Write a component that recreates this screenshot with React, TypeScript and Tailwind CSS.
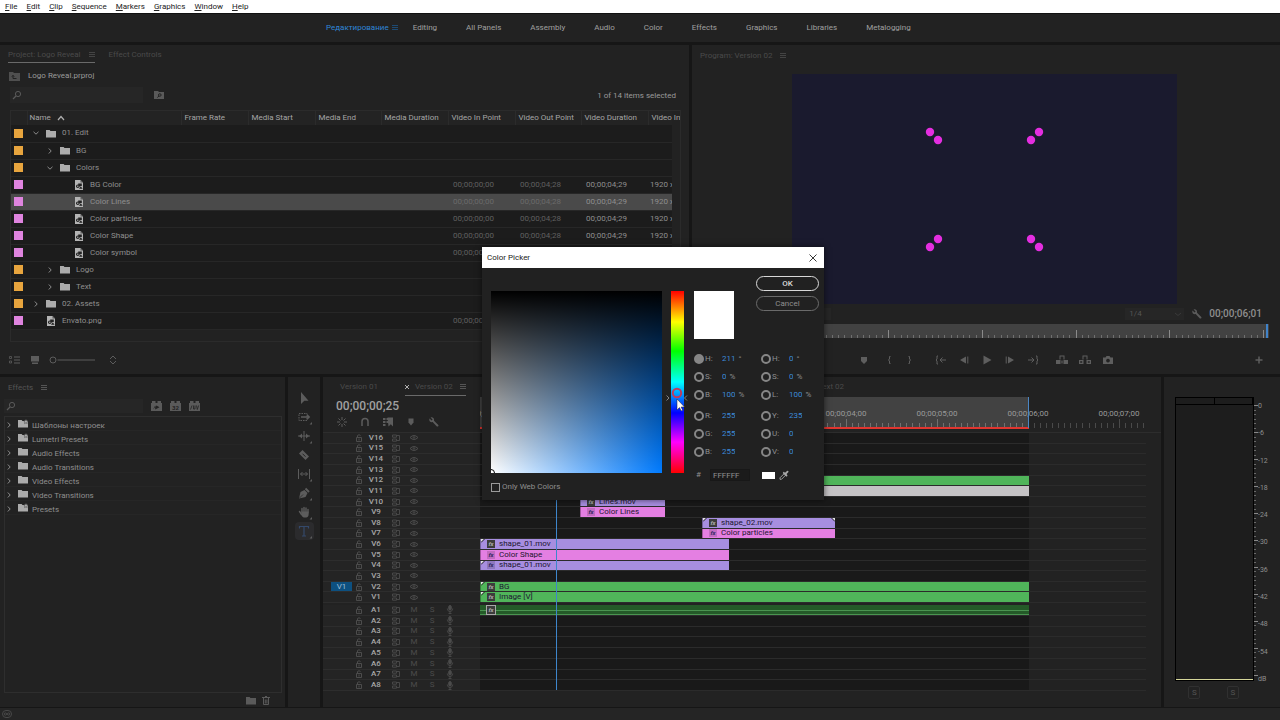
import React from 'react';
import clsx from 'clsx';

const menus = ['File', 'Edit', 'Clip', 'Sequence', 'Markers', 'Graphics', 'Window', 'Help'];

const workspaces = [
  'Editing', 'All Panels', 'Assembly', 'Audio', 'Color', 'Effects', 'Graphics', 'Libraries', 'Metalogging',
];

interface ProjectItem {
  name: string;
  kind: 'bin' | 'file';
  depth: number;
  open?: boolean;
  media?: boolean;
  selected?: boolean;
}

const projectItems: ProjectItem[] = [
  { name: '01. Edit', kind: 'bin', depth: 0, open: true },
  { name: 'BG', kind: 'bin', depth: 1 },
  { name: 'Colors', kind: 'bin', depth: 1, open: true },
  { name: 'BG Color', kind: 'file', depth: 2, media: true },
  { name: 'Color Lines', kind: 'file', depth: 2, media: true, selected: true },
  { name: 'Color particles', kind: 'file', depth: 2, media: true },
  { name: 'Color Shape', kind: 'file', depth: 2, media: true },
  { name: 'Color symbol', kind: 'file', depth: 2, media: true },
  { name: 'Logo', kind: 'bin', depth: 1 },
  { name: 'Text', kind: 'bin', depth: 1 },
  { name: '02. Assets', kind: 'bin', depth: 0 },
  { name: 'Envato.png', kind: 'file', depth: 0, media: true },
];

const columns = [
  { name: 'Frame Rate', width: 'w-[67px]' },
  { name: 'Media Start', width: 'w-[67px]' },
  { name: 'Media End', width: 'w-[66px]' },
  { name: 'Media Duration', width: 'w-[67px]' },
  { name: 'Video In Point', width: 'w-[67px]' },
  { name: 'Video Out Point', width: 'w-[66px]' },
  { name: 'Video Duration', width: 'w-[67px]' },
  { name: 'Video In', width: 'w-6' },
];

const effectBins = [
  { name: 'Шаблоны настроек', preset: true },
  { name: 'Lumetri Presets', preset: true },
  { name: 'Audio Effects' },
  { name: 'Audio Transitions' },
  { name: 'Video Effects' },
  { name: 'Video Transitions' },
  { name: 'Presets', preset: true },
];

interface Clip {
  name: string;
  start: number;
  end: number;
  tone: 'violet' | 'pink' | 'green' | 'grey';
  dark?: boolean;
  headMark?: boolean;
  tailMark?: boolean;
}

// start and end are in timeline pixels, 91px to the second
const clips: Record<string, Clip> = {
  V12: { name: 'Text 02', start: 222, end: 549, tone: 'green' },
  V11: { name: 'Text 02', start: 222, end: 549, tone: 'grey' },
  V10: { name: 'Lines.mov', start: 100, end: 185, tone: 'violet', dark: true },
  V9: { name: 'Color Lines', start: 100, end: 185, tone: 'pink' },
  V8: { name: 'shape_02.mov', start: 222, end: 355, tone: 'violet', dark: true, headMark: true, tailMark: true },
  V7: { name: 'Color particles', start: 222, end: 355, tone: 'pink' },
  V6: { name: 'shape_01.mov', start: 0, end: 249, tone: 'violet', dark: true, headMark: true },
  V5: { name: 'Color Shape', start: 0, end: 249, tone: 'pink' },
  V4: { name: 'shape_01.mov', start: 0, end: 249, tone: 'violet', headMark: true },
  V2: { name: 'BG', start: 0, end: 549, tone: 'green', dark: true, headMark: true },
  V1: { name: 'Image [V]', start: 0, end: 549, tone: 'green', dark: true, headMark: true },
};

const tones = {
  violet: 'bg-[#a78ee0]',
  pink: 'bg-[#e47fe2]',
  green: 'bg-[#50b55a]',
  grey: 'bg-[#c4c2c4]',
};

const videoTracks = Array.from({ length: 16 }, (_, i) => `V${16 - i}`);
const audioTracks = Array.from({ length: 8 }, (_, i) => `A${i + 1}`);

const MenuIcon = ({ className = 'text-[#444]' }: { className?: string }) => (
  <svg viewBox="0 0 6 6" className={clsx('size-1.5 shrink-0', className)} stroke="currentColor" shapeRendering="crispEdges">
    <path d="M0 .5h6M0 2.5h6M0 4.5h6" />
  </svg>
);

const SearchIcon = () => (
  <svg viewBox="0 0 10 10" className="size-2.5 shrink-0 text-[#5a5a5a]" fill="none" stroke="currentColor">
    <circle cx="6" cy="4" r="2.6" />
    <path d="M4 6 1 9" strokeWidth="1.2" />
  </svg>
);

const Chevron = ({ open }: { open?: boolean }) => (
  <svg viewBox="0 0 8 8" className="size-2 shrink-0 text-[#8c8c8c]" fill="none" stroke="currentColor">
    <path d={open ? 'M1.5 2.8 4 5.2l2.5-2.4' : 'M2.8 1.5 5.2 4 2.8 6.5'} />
  </svg>
);

const FolderIcon = ({ preset, className = 'text-[#ababab]' }: { preset?: boolean; className?: string }) => (
  <svg viewBox="0 0 10 9" className={clsx('h-[9px] w-2.5 shrink-0', className)} fill="currentColor">
    <path d="M0 1h3.6l.9 1H10v6.6H0z" />
    {preset && <path d="m8 0 .7 1.6 1.3.2-1 1.2.2 1.6L8 3.8l-1.4.8.2-1.6-1-1.2 1.5-.2z" stroke="#222" strokeWidth=".4" />}
  </svg>
);

const FileIcon = () => (
  <svg viewBox="0 0 10 11" className="h-[11px] w-2.5 shrink-0">
    <path d="M1 1h5.5L9 3.5V11H1z" fill="#b4b4b4" />
    <path d="M6.5 1v2.500H9" fill="#5a5a5a" />
    <path d="M4.200 4.500h3.600v2.500H4.200z" fill="#222" />
    <circle cx="3.800" cy="7.300" r="1.800" fill="#222" />
    <path d="m5 9.800 1.800-2.600 1.800 2.600z" fill="#222" />
    <circle cx="3.800" cy="7.300" r=".7" fill="#b4b4b4" />
  </svg>
);

const FxBadge = ({ dark }: { dark?: boolean }) => (
  <span
    className={clsx(
      'flex size-2 shrink-0 items-center justify-center text-[6px] leading-none font-bold italic',
      dark ? 'bg-[#3c3c3c] text-[#b0b0b0]' : 'bg-black/15 text-[#2f2660]',
    )}
  >
    fx
  </span>
);

const WrenchIcon = () => (
  <svg viewBox="0 0 10 10" className="size-2.5 shrink-0" fill="currentColor">
    <path d="M1.6.5 3.6 2.5 2.6 3.6.5 1.6C-.2 3.5 1 5.6 3.6 5.1l4.3 4.3c1 .6 2-.5 1.4-1.4L5 3.7C5.5 1.3 3.7-.1 1.6.5z" />
  </svg>
);

const MenuBar = () => (
  <nav className="flex h-3.5 items-center gap-[9px] border-b border-[#111] bg-white pl-[5px] text-[#222]">
    {menus.map((m) => (
      <button key={m} className="leading-[11px]">
        <span className="underline underline-offset-1">{m[0]}</span>
        {m.slice(1)}
      </button>
    ))}
  </nav>
);

const WorkspaceBar = () => (
  <div className="flex h-7 items-center bg-[#222] pl-[326px] text-[#a0a0a0]">
    <button className="text-[#2f86d8]">Редактирование</button>
    <MenuIcon className="ml-[3px] text-[#1d4a73]" />
    <div className="ml-[15px] flex gap-[29px]">
      {workspaces.map((w) => (
        <button key={w} className="whitespace-nowrap">{w}</button>
      ))}
    </div>
  </div>
);

const ProjectTable = () => (
  <div className="h-[232px] overflow-hidden border border-[#2b2b2b] bg-[#222] pr-2">
    <table className="w-full table-fixed border-collapse text-left">
      <colgroup>
        <col className="w-4" />
        <col />
        {columns.map((c) => (
          <col key={c.name} className={c.width} />
        ))}
      </colgroup>
      <thead>
        <tr className="h-[14px] bg-[#232323] text-[#a6a6a6]">
          <th />
          <th className="border-l border-[#2b2b2b] pl-0.5 font-normal">
            <span className="flex items-center gap-1.5">
              Name
              <svg viewBox="0 0 8 6" className="h-1.5 w-2 text-[#b0b0b0]" fill="none" stroke="currentColor" strokeWidth="1.2">
                <path d="m1 5 3-3.5L7 5" />
              </svg>
            </span>
          </th>
          {columns.map((c) => (
            <th key={c.name} className="border-l border-[#2b2b2b] pl-[3px] font-normal whitespace-nowrap">{c.name}</th>
          ))}
        </tr>
      </thead>
      <tbody>
        {projectItems.map((item) => (
          <tr
            key={item.name}
            className={clsx('h-[17px] border-b border-[#272727] text-[#8f8f8f]', item.selected ? 'bg-[#4a4a4a]' : 'bg-[#1c1c1c]')}
          >
            <td className="pl-[3px]">
              <span className={clsx('block size-[9px]', item.kind === 'bin' ? 'bg-[#e8a53e]' : 'bg-[#df84df]')} />
            </td>
            <td>
              <span
                className={clsx(
                  'flex items-center whitespace-nowrap',
                  item.depth === 0 && 'pl-[5px]',
                  item.depth === 1 && 'pl-[19px]',
                  item.depth === 2 && 'pl-[33px]',
                )}
              >
                {item.kind === 'bin' ? <Chevron open={item.open} /> : <span className="w-2" />}
                <span className="mr-1.5 ml-1.5">{item.kind === 'bin' ? <FolderIcon /> : <FileIcon />}</span>
                {item.name}
              </span>
            </td>
            <td /><td /><td /><td />
            <td className={clsx('pl-[5px]', item.selected ? 'text-[#6a6a6a]' : 'text-[#606060]')}>{item.media && '00;00;00;00'}</td>
            <td className={clsx('pl-[5px]', item.selected ? 'text-[#6a6a6a]' : 'text-[#606060]')}>{item.media && '00;00;04;28'}</td>
            <td className="pl-[5px]">{item.media && '00;00;04;29'}</td>
            <td className="overflow-hidden pl-0.5 whitespace-nowrap">{item.media && '1920 x'}</td>
          </tr>
        ))}
      </tbody>
    </table>
  </div>
);

const ProjectPanel = () => (
  <section className="flex min-w-0 flex-col bg-[#222] pr-2 pl-2">
    <div className="flex h-[18px] items-stretch gap-3.5 text-[#4a4a4a]">
      <button className="flex items-center gap-2 border-b border-[#6a6a6a] pt-[3px]">
        Project: Logo Reveal
        <MenuIcon />
      </button>
      <button className="pt-0.5">Effect Controls</button>
    </div>
    <div className="flex h-6 items-center gap-2 pt-0.5 pl-px text-[#9a9a9a]">
      <svg viewBox="0 0 11 9" className="h-[9px] w-[11px] text-[#4f4f4f]" fill="currentColor">
        <path d="M0 0h4l1 1h6v8H0z" />
        <path d="M4 3.5v3h3.5M2.8 4.7 4 3.3l1.2 1.4" stroke="#222" fill="none" />
      </svg>
      Logo Reveal.prproj
    </div>
    <div className="flex h-4 items-center pl-0.5 text-[#9a9a9a]">
      <label className="flex h-4 w-[133px] items-center bg-[#262626] pl-0.5">
        <SearchIcon />
        <input aria-label="Search project" className="w-full bg-transparent outline-none" />
      </label>
      <svg viewBox="0 0 10 8" className="ml-[11px] h-2 w-2.5 text-[#5a5a5a]" fill="currentColor">
        <path d="M0 0h4l1 1h5v7H0z" />
        <path d="M3.3 6.5 5 5" stroke="#222" />
        <circle cx="5.8" cy="4" r="1.3" fill="none" stroke="#222" />
      </svg>
      <span className="ml-auto pt-0.5 pr-[5px]">1 of 14 items selected</span>
    </div>
    <div className="pt-[7px] pl-[2px]">
      <ProjectTable />
    </div>
    <div className="flex h-8 items-center pt-1 pl-px text-[#5c5c5c]">
      <svg viewBox="0 0 11 8" className="h-2 w-[11px]" fill="none" stroke="currentColor">
        <path d="M5 1h6M5 4h6M5 7h6" />
        <path d="M.5.5h2v2h-2zM.5 5h2v2h-2z" strokeWidth=".8" />
      </svg>
      <svg viewBox="0 0 8 8" className="ml-[11px] size-2" fill="currentColor">
        <path d="M0 0h8v5.5H0zM1 6.5h6V8H1z" />
      </svg>
      <svg viewBox="0 0 46 8" className="ml-[10px] h-2 w-[46px]" fill="none" stroke="currentColor">
        <circle cx="4" cy="4" r="3" />
        <path d="M8.5 4H46" />
      </svg>
      <svg viewBox="0 0 8 10" className="ml-[14px] h-2.5 w-2" fill="none" stroke="currentColor">
        <path d="m1 4 3-3 3 3M1 6l3 3 3-3" />
      </svg>
    </div>
  </section>
);

const monitorDots = [
  [138, 58], [146, 66], [247, 58], [239, 66], [146, 165], [138, 173], [239, 165], [247, 173],
];

const transport = [
  { label: 'Add marker', d: 'M3 3h6v4l-3 3-3-3z', gap: '' },
  { label: 'Mark in', d: 'M7.5 2.5H6.5v2.7L5.3 6l1.2.8v2.7h1', gap: 'ml-0.5', line: true },
  { label: 'Mark out', d: 'M4.5 2.5h1v2.7L6.7 6l-1.2.8v2.7h-1', gap: '-ml-0.5', line: true },
  { label: 'Go to in', d: 'M3 2H2v3L1 6l1 1v3h1M11 6H5M7.5 3.5 5 6l2.5 2.5', gap: 'ml-2', line: true },
  { label: 'Step back', d: 'M8 2.5v7L2 6zM9.3 2.5h1v7h-1z', gap: '' },
  { label: 'Play', d: 'M2.5 1.5 10.5 6l-8 4.5z', gap: '' },
  { label: 'Step forward', d: 'M4 2.5v7L10 6zM1.7 2.5h1v7h-1z', gap: '' },
  { label: 'Go to out', d: 'M9 2h1v3l1 1-1 1v3H9M1 6h6M4.5 3.5 7 6 4.5 8.5', gap: '', line: true },
  { label: 'Lift', d: 'M0 6h4.5v4H0zM7.5 6H12v4H7.5zM3.5 1.5h5v4h-1v-3h-3v3h-1zM5.4 6.5h1.200v3H5.400z', gap: 'ml-1.5' },
  { label: 'Extract', d: 'M0 6h4.5v4H0zM1.2 7.2v1.6h2V7.200zM7.5 6H12v4H7.5zM8.800 7.200v1.600h2V7.200zM3.5 1.5h5v4h-1v-3h-3v3h-1z', gap: '' },
  { label: 'Export frame', d: 'M1 3.5h2.5L4.5 2h3l1 1.500H11V10H1zM6 4.700a1.900 1.900 0 1 0 .01 0z', gap: '' },
];

const ProgramPanel = () => (
  <section className="flex min-w-0 flex-col bg-[#222] pr-[11px] pl-2">
    <div className="flex h-[18px] items-center gap-2 pt-[3px] text-[#4a4a4a]">
      Program: Version 02
      <MenuIcon />
    </div>
    <svg viewBox="0 0 385 230" className="mx-auto mt-[11px] h-[230px] w-[385px] bg-[#1a1a2e]" fill="#e42ee0">
      {monitorDots.map(([x, y]) => (
        <circle key={`${x}-${y}`} cx={x} cy={y} r="4.2" />
      ))}
    </svg>
    <div className="flex h-5 items-center justify-end pr-[7px] text-[#5a5a5a]">
      <select aria-label="Zoom level" className="mr-auto ml-[80px] h-3 w-[51px] appearance-none bg-[#262626] pl-1">
        <option>Fit</option>
      </select>
      <label className="relative mr-2 flex items-center">
        <select aria-label="Playback resolution" className="h-3 w-[59px] appearance-none bg-[#262626] pl-1 text-[#555]">
          <option>1/4</option>
        </select>
        <svg viewBox="0 0 8 8" className="absolute right-0.5 size-2" fill="none" stroke="#3a3a3a">
          <path d="m1 3 3 2.5L7 3" />
        </svg>
      </label>
      <WrenchIcon />
      <span className="ml-[7px] text-[10px] font-medium text-[#8f8f8f]">00;00;06;01</span>
    </div>
    <svg className="h-3.5 w-full bg-[#424242]" shapeRendering="crispEdges">
      {Array.from({ length: 91 }, (_, i) => (
        <line
          key={i}
          x1={1 + i * 6.25}
          x2={1 + i * 6.25}
          y1={i % 15 === 0 ? 6 : 11}
          y2="14"
          stroke={i % 15 === 0 ? '#8a8a8a' : '#707070'}
        />
      ))}
      <rect x="99.5%" width="2" height="14" fill="#3f82c8" />
    </svg>
    <div className="flex flex-1 items-center justify-center pt-2 text-[#5e5e5e]">
      <span className="w-[17px]" />
      <div className="flex flex-1 justify-center">
        {transport.map((t) => (
          <button key={t.label} aria-label={t.label} className={clsx('flex w-[23px] justify-center', t.gap)}>
            <svg
              viewBox="0 0 12 12"
              className="size-3"
              fill={t.line ? 'none' : 'currentColor'}
              stroke={t.line ? 'currentColor' : 'none'}
              fillRule="evenodd"
            >
              <path d={t.d} />
            </svg>
          </button>
        ))}
      </div>
      <button aria-label="Button editor" className="mr-1.5">
        <svg viewBox="0 0 8 8" className="size-2" stroke="currentColor" strokeWidth="1.5">
          <path d="M4 .5v7M.5 4h7" />
        </svg>
      </button>
    </div>
  </section>
);

const filters = [
  { label: 'Accelerated effects', mark: <path d="M2 8.5 4.200 4.500V8.500L8.500 6.300 5.500 4.500" fill="#222" /> },
  { label: '32-bit color effects', mark: <text x="5.500" y="8.500" fontSize="6" fontWeight="700" textAnchor="middle" fill="#222">32</text> },
  { label: 'YUV effects', mark: <path d="M1.500 8.500 3 4.500M4.500 4.500v3.500h1.500V4.500M7.500 4.500 8.300 8.500 9.600 4.500" fill="none" stroke="#222" strokeWidth=".8" /> },
];

const EffectsPanel = () => (
  <section className="flex w-[285px] flex-col bg-[#222] pr-[3px] pl-1">
    <div className="flex h-[22px] items-center gap-2 pb-px pl-1 text-[#555]">
      Effects
      <MenuIcon className="text-[#555]" />
    </div>
    <div className="flex h-3.5 items-center text-[#5a5a5a]">
      <label className="flex h-3.5 w-[139px] items-center bg-[#262626] pl-0.5">
        <SearchIcon />
        <input aria-label="Search effects" className="w-full bg-transparent outline-none" />
      </label>
      <div className="flex gap-2 pl-2">
        {filters.map((f) => (
          <button key={f.label} aria-label={f.label}>
            <svg viewBox="0 0 11 10" className="h-2.5 w-[11px]" fill="currentColor">
              <path d="M0 2h1V0h3.500v2h2V0H10v2h1v8H0z" />
              {f.mark}
            </svg>
          </button>
        ))}
      </div>
    </div>
    <ul className="mt-[3px] flex-1 border border-[#2e2e2e] text-[#8f8f8f]">
      {effectBins.map((b) => (
        <li key={b.name} className="flex h-[14px] items-center border-b border-[#262626] pt-1">
          <span className="pb-0.5"><Chevron /></span>
          <span className="mr-1 ml-[5px] pb-1">
            <FolderIcon preset={b.preset} />
          </span>
          {b.name}
        </li>
      ))}
    </ul>
    <div className="flex h-[14px] items-center justify-end gap-1.5 pr-3 text-[#5a5a5a]">
      <FolderIcon className="text-[#5a5a5a]" />
      <svg viewBox="0 0 8 9" className="h-[9px] w-2" fill="none" stroke="currentColor">
        <path d="M0 1.5h8M3 .5h2M1.5 2v6.5h5V2M3.300 3.500v4M4.900 3.500v4" />
      </svg>
    </div>
  </section>
);

const tools = [
  { label: 'Selection', body: <path d="M3 0v12l3.300-3.200h4.200z" fill="currentColor" stroke="none" /> },
  {
    label: 'Track select forward',
    more: true,
    body: (
      <>
        <path d="M1 2.5h8v7H1z" strokeDasharray="1.5 1" />
        <path d="M3 6h8M9 3.8 11.3 6 9 8.2" strokeWidth="1.300" />
      </>
    ),
  },
  {
    label: 'Ripple edit',
    more: true,
    body: (
      <>
        <path d="M6 1v10M0 6h12" />
        <path d="M1 6l3-2.500v5zM11 6 8 3.500v5z" fill="currentColor" stroke="none" />
      </>
    ),
  },
  {
    label: 'Razor',
    body: (
      <>
        <path d="M4.500 1 11 7.500 7.500 11 1 4.500z" fill="currentColor" stroke="none" />
        <path d="m4.500 4.700 3 3" stroke="#222" />
      </>
    ),
  },
  { label: 'Slip', more: true, body: <path d="M.5 1v10M11.5 1v10M2.5 6h7M4.5 4l-2 2 2 2M7.5 4l2 2-2 2" /> },
  {
    label: 'Pen',
    more: true,
    body: (
      <>
        <path d="M1 11.5 2.5 5l4-2 3 3-2 4z" fill="currentColor" stroke="none" />
        <path d="m7.5 1.5 3.5 3.5" strokeWidth="2" />
        <path d="m1.5 11 3.5-3.5" stroke="#222" strokeWidth=".7" />
      </>
    ),
  },
  {
    label: 'Hand',
    more: true,
    body: (
      <>
        <path d="M4 6V2.5M6 6V1.5M8 6V2M10 7V3.5M1.5 5.5l2 3" strokeWidth="1.400" strokeLinecap="round" />
        <path d="M3.300 5.500h7.300v3.500c0 1-1.300 2.500-2.300 2.500H6c-1 0-2.700-2-2.700-3z" fill="currentColor" stroke="none" />
      </>
    ),
  },
  { label: 'Type', more: true, body: <path d="M1.5 3.5v-2h9v2M6 1.5v9.500M4 11h4" strokeWidth="1.200" />, active: true },
];

const ToolsPanel = () => (
  <section className="flex w-8 flex-col items-center gap-px bg-[#222] pt-3">
    {tools.map((t) => (
      <button
        key={t.label}
        aria-label={t.label}
        className={clsx(
          'flex h-[18px] w-[19px] items-center justify-center rounded-sm',
          t.active ? 'bg-[#2b2b2d] text-[#34496a]' : 'text-[#5c5c5c]',
        )}
      >
        <svg viewBox="-2 -2 17 16" className="h-4 w-[17px]" fill="none" stroke="currentColor">
          {t.body}
          {t.more && <path d="M14 11v2.500h-2.500z" fill="#5c5c5c" stroke="none" />}
        </svg>
      </button>
    ))}
  </section>
);

const SyncIcon = () => (
  <svg viewBox="0 0 9 8" className="h-2 w-[9px]" fill="none" stroke="currentColor" strokeWidth=".9">
    <path d="M.5 1h4v2.200h-4zM.5 5h4v2.200h-4zM5 1.500h2.500v5H5" />
  </svg>
);

const TrackHeader = ({ name }: { name: string }) => {
  const audio = name[0] === 'A';
  return (
    <div className="flex w-[157px] shrink-0 items-center border-b border-[#2d2d2d] bg-[#242424] pl-2 text-[#4c4c4c]">
      <span className="mr-[3px] flex w-[21px] self-stretch">
        {name === 'V2' && <button className="flex-1 bg-[#0d5080] leading-none text-[#9dbcd4]">V1</button>}
      </span>
      <svg viewBox="0 0 8 8" className="size-2" fill="none" stroke="currentColor">
        <path d="M1.5 3.5h5v4h-5zM2.5 3.5V1.5Q4 0 5.5 1.5M4 4.5v2" />
      </svg>
      <b className="ml-1 w-[18px] text-center leading-none font-medium text-[#a8a8a8]">{name}</b>
      <span className="ml-[7px] w-[9px]"><SyncIcon /></span>
      {audio ? (
        <>
          <button className="ml-2 w-[10px] leading-none">M</button>
          <button className="ml-2 w-[10px] leading-none">S</button>
          <svg viewBox="0 0 8 9" className="ml-[9px] h-[9px] w-2" fill="none" stroke="currentColor" strokeWidth=".9">
            <rect x="2.7" y=".5" width="2.6" height="4.5" rx="1.3" fill="currentColor" />
            <path d="M1.300 3.500c0 4 5.400 4 5.400 0M4 6.500V8.500M2.500 8.500h3" />
          </svg>
        </>
      ) : (
        <svg viewBox="0 0 10 7" className="ml-2 h-[7px] w-2.5" fill="none" stroke="currentColor">
          <path d="M1 3.5Q5-.5 9 3.5 5 7.5 1 3.5z" />
          <circle cx="5" cy="3.5" r=".8" />
        </svg>
      )}
    </div>
  );
};

const TrackLane = ({ name }: { name: string }) => {
  const clip = clips[name];
  return (
    <div className="relative mr-[15px] flex flex-1 border-b border-[#2b2b2b]">
      <span className="w-[549px] shrink-0 bg-[#191919]" />
      {clip && (
        <div
          className={clsx(
            'absolute inset-y-0 flex items-center gap-1 overflow-hidden border-l border-black/30 pl-1.5 leading-none whitespace-nowrap text-[#1c1530]',
            tones[clip.tone],
          )}
          style={{ left: clip.start, width: clip.end - clip.start }}
        >
          <FxBadge dark={clip.dark} />
          {clip.name}
          {clip.headMark && (
            <svg viewBox="0 0 4 4" className="absolute top-0 left-0 size-1">
              <path d="M0 0h3L0 3z" fill="#e4e4e4" />
              <path d="M3.500 0 0 3.500" stroke="#222" />
            </svg>
          )}
          {clip.tailMark && (
            <svg viewBox="0 0 4 4" className="absolute top-0 right-0 size-1">
              <path d="M4 0H1l3 3z" fill="#e4e4e4" />
              <path d="M.5 0 4 3.500" stroke="#222" />
            </svg>
          )}
        </div>
      )}
      {name === 'A1' && (
        <div className="absolute inset-y-0 left-0 flex w-[549px] items-center bg-[#245a28] pl-1.5">
          <span className="absolute inset-x-0 top-[5px] h-px bg-[#4a9450]" />
          <span className="absolute inset-x-0 bottom-0 h-px bg-[#4a9450]" />
          <span className="relative border border-[#a8a8a8]"><FxBadge dark /></span>
        </div>
      )}
    </div>
  );
};

const Tracks = ({ names, className }: { names: string[]; className: string }) => (
  <div className={clsx('flex flex-col', className)}>
    {names.map((n) => (
      <div key={n} className="flex min-h-0 flex-1">
        <TrackHeader name={n} />
        <TrackLane name={n} />
      </div>
    ))}
  </div>
);

const TimelinePanel = () => (
  <section className="relative flex min-w-0 flex-1 flex-col bg-[#222]">
    <div className="flex h-[19px] items-stretch pl-[17px] text-[#4a4a4a]">
      <button className="pt-px">Version 01</button>
      <button className="ml-[27px] flex items-center gap-1.5 border-b border-[#6a6a6a] pt-0.5">
        <svg viewBox="0 0 4 4" className="size-1" stroke="#b0b0b0">
          <path d="m0 0 4 4M4 0 0 4" />
        </svg>
        <span className="mr-px">Version 02</span>
        <MenuIcon className="text-[#555]" />
      </button>
      <button className="ml-[352px] pt-px">Text 02</button>
    </div>
    <div className="flex h-9">
      <div className="w-[157px] pl-[13px]">
        <div className="h-[19px] text-[12px] leading-[21px] font-medium text-[#a0a0a0]">00;00;00;25</div>
        <div className="flex gap-[13px] pt-0.5 pl-px text-[#5c5c5c]">
          <svg viewBox="0 0 10 10" className="size-2.5" fill="none" stroke="currentColor">
            <path d="M5 0v3M5 7v3M0 5h3M7 5h3M1.5 1.5l2 2M8.5 1.5l-2 2M1.5 8.5l2-2M8.5 8.5l-2-2" />
          </svg>
          <svg viewBox="0 0 10 10" className="size-2.5" fill="none" stroke="currentColor" strokeWidth="1.5">
            <path d="M2 9V4.5a3 3 0 0 1 6 0V9" />
          </svg>
          <svg viewBox="0 0 10 10" className="size-2.5" fill="currentColor">
            <path d="M0 1h2.5v2H0zM0 4h2.5v2H0zM0 7h2.5v2H0zM3.5 1h2v2h-2zM3.500 4h1.500v2H3.500zM4.500.5H10v9L7.800 7.300 5.500 9.500z" />
          </svg>
          <svg viewBox="0 0 10 10" className="size-2.5" fill="currentColor">
            <path d="M2.5 1.5h5v4L5 8.5l-2.500-3z" />
          </svg>
          <WrenchIcon />
        </div>
      </div>
      <div className="mr-[15px] flex-1 pt-px">
        <svg className="h-[33px] w-full" shapeRendering="crispEdges">
          <rect width="549" height="31" fill="#424242" />
          {Array.from({ length: 111 }, (_, i) => (
            <line
              key={i}
              x1={2 + i * 6.07}
              x2={2 + i * 6.07}
              y1={i % 15 === 0 ? 22 : 26}
              y2="31"
              stroke={i < 91 ? '#707070' : '#4a4a4a'}
            />
          ))}
          <rect y="30" width="549" height="2" fill="#e0352f" />
          {Array.from({ length: 8 }, (_, i) => (
            <text key={i} x={2 + i * 91} y="19" textAnchor="middle" fill="#9a9a9a">
              {`00;00;0${i};00`}
            </text>
          ))}
          <rect x="548" width="1" height="31" fill="#4b86c4" />
        </svg>
      </div>
    </div>
    <Tracks names={videoTracks} className="h-[171px] border-t border-[#2d2d2d]" />
    <Tracks names={audioTracks} className="mt-[2px] h-[86px]" />
    <span className="absolute top-[20px] bottom-[17px] left-[233px] w-px bg-[#3e86cc]" />
  </section>
);

const meterMarks = ['0', '-6', '-12', '-18', '-24', '-30', '-36', '-42', '-48', '-54', 'dB'];

const MeterPanel = () => (
  <section className="flex w-[116px] flex-col bg-[#222] pt-5 pl-[11px]">
    <div className="flex">
      <div className="grid h-[284px] w-[79px] grid-cols-2 border border-black bg-[#1d1d1d]">
        {['left', 'right'].map((ch) => (
          <div key={ch} className="flex flex-col justify-between border-b border-[#d6d79a]">
            <span className="h-[7px] border-r border-b border-black" />
          </div>
        ))}
      </div>
      <svg viewBox="0 0 4 284" className="mt-1 h-[280px] w-1" stroke="#8a8a8a" shapeRendering="crispEdges">
        {Array.from({ length: 61 }, (_, i) => (
          <path key={i} d={`M0 ${5 + i * 4.55}h${i % 6 === 0 ? 4 : 2}`} strokeWidth={i % 6 === 0 ? 1 : 0.7} />
        ))}
      </svg>
      <div className="mt-1 flex h-[283px] flex-col justify-between text-[7px] leading-[10px] text-[#8f8f8f]">
        {meterMarks.map((m) => (
          <span key={m}>{m}</span>
        ))}
      </div>
    </div>
    <div className="flex w-[77px] justify-around pt-[2px] text-[#555]">
      <button className="h-[13px] w-3 rounded-xs border border-[#303030] leading-none">S</button>
      <button className="h-[13px] w-3 rounded-xs border border-[#303030] leading-none">S</button>
    </div>
  </section>
);

interface Channel {
  label: string;
  value: string;
  unit?: string;
}

const rgbChannels: Channel[] = [
  { label: 'H', value: '211', unit: '°' },
  { label: 'S', value: '0', unit: '%' },
  { label: 'B', value: '100', unit: '%' },
  { label: 'R', value: '255' },
  { label: 'G', value: '255' },
  { label: 'B', value: '255' },
];

const yuvChannels: Channel[] = [
  { label: 'H', value: '0', unit: '°' },
  { label: 'S', value: '0', unit: '%' },
  { label: 'L', value: '100', unit: '%' },
  { label: 'Y', value: '235' },
  { label: 'U', value: '0' },
  { label: 'V', value: '0' },
];

const ChannelList = ({ id, channels }: { id: string; channels: Channel[] }) => (
  <div className="flex flex-col">
    {channels.map((c, i) => (
      <div key={i} className={clsx('flex h-[18px] items-center', i === 3 && 'mt-[3px]')}>
        <label className="flex w-7 items-center gap-px">
          <input
            type="radio"
            name="channel"
            defaultChecked={id === 'rgb' && i === 0}
            className="size-2.5 shrink-0 appearance-none rounded-full border-2 border-[#868686] checked:bg-[#868686]"
          />
          {c.label}:
        </label>
        <input
          aria-label={`${id} ${c.label}`}
          defaultValue={c.value}
          className="bg-transparent pb-px text-[#3c8ad8] outline-none"
          style={{ width: `${c.value.length}ch` }}
        />
        <span className="ml-[3px]">{c.unit}</span>
      </div>
    ))}
  </div>
);

const ColorPicker = () => (
  <div
    role="dialog"
    aria-label="Color Picker"
    className="absolute top-[247px] left-[482px] w-[342px] bg-[#212121] text-[#8f8f8f] shadow-[0_0_6px_rgba(0,0,0,0.6)]"
  >
    <div className="flex h-[21px] items-center justify-between bg-white pr-[7px] pl-[5px] text-[#222]">
      Color Picker
      <button aria-label="Close">
        <svg viewBox="0 0 8 8" className="size-2" stroke="currentColor" strokeWidth=".9">
          <path d="m.5.5 7 7M7.500.5l-7 7" />
        </svg>
      </button>
    </div>
    <div className="flex h-[232px] pt-2 pr-[5px] pl-[9px]">
      <div className="pt-[15px]">
        <div className="relative h-[182px] w-[171px] overflow-hidden bg-[linear-gradient(to_bottom,#000,transparent),linear-gradient(to_right,#fff,#007bff)]">
          <span className="absolute -bottom-1 -left-1 size-2 rounded-full border border-black" />
        </div>
        <label className="mt-[9px] flex items-center gap-0.5">
          <input type="checkbox" className="size-[9px] appearance-none border border-[#9a9a9a]" />
          Only Web Colors
        </label>
      </div>
      <div className="relative mt-[15px] ml-[9px] h-[182px] w-[13px] bg-[linear-gradient(to_bottom,#f00,#ff0_17%,#0f0_33%,#0ff_50%,#00f_67%,#f0f_83%,#f00)]">
        <svg viewBox="0 0 24 24" className="absolute top-[96px] -left-[6px] size-6" fill="none">
          <path d="m1.5 8.5 2.5 2.5-2.5 2.5M22 8.5 19.5 11l2.5 2.5" stroke="#8f8f8f" strokeWidth=".9" />
          <circle cx="12" cy="6" r="4.2" stroke="#c03a5c" strokeWidth="2" />
          <path d="M12 12v11l2.5-2.4 1.7 3.400 1.500-.8-1.600-3.200h3.400z" fill="#fff" stroke="#222" strokeWidth=".5" />
        </svg>
      </div>
      <div className="ml-2.5 flex flex-1 flex-col">
        <div className="flex justify-between">
          <span className="mt-[15px] h-12 w-10 bg-white" />
          <div className="flex flex-col gap-[5px]">
            <button className="h-[15px] w-[63px] rounded-full border border-[#d8d8d8] font-medium text-[#d8d8d8]">OK</button>
            <button className="h-[15px] w-[63px] rounded-full border border-[#6a6a6a]">Cancel</button>
          </div>
        </div>
        <div className="grid grid-cols-[67px_1fr] pt-[11px]">
          <ChannelList id="rgb" channels={rgbChannels} />
          <ChannelList id="yuv" channels={yuvChannels} />
        </div>
        <div className="flex items-center pt-2 pl-0.5">
          <label htmlFor="hex" className="w-3.5">#</label>
          <input id="hex" defaultValue="FFFFFF" className="h-3 w-10 border border-[#181818] bg-[#1b1b1b] pl-0.5 outline-none" />
          <span className="ml-3 h-[7px] w-[13px] bg-white" />
          <svg viewBox="0 0 10 10" className="ml-1 size-2.5" fill="none" stroke="#a8a8a8">
            <path d="M1 9.3v-1.500L5.500 3.300 7 4.800 2.500 9.300z" strokeWidth=".9" />
            <path d="m4.800 2.800 2.700 2.700M6.700 3.500 8.600 1.600" strokeWidth="1.800" strokeLinecap="round" />
          </svg>
        </div>
      </div>
    </div>
  </div>
);

export default function App() {
  return (
    <div className="relative flex min-h-screen flex-col overflow-hidden bg-[#161616] font-['Roboto',sans-serif] text-[8px] leading-[10px]">
      <MenuBar />
      <WorkspaceBar />
      <div className="mt-[3px] grid h-[329px] grid-cols-[689fr_588fr] gap-[3px]">
        <ProjectPanel />
        <ProgramPanel />
      </div>
      <div className="mt-[3px] flex flex-1 gap-[3px]">
        <EffectsPanel />
        <ToolsPanel />
        <TimelinePanel />
        <MeterPanel />
      </div>
      <footer className="mt-px flex h-3 items-center bg-[#252525] pl-0.5">
        <svg viewBox="0 0 10 8" className="h-2 w-2.5" fill="none" stroke="#484848">
          <rect x=".5" y=".5" width="9" height="7" rx="3.5" />
          <path d="M5 4c-1-1.500-2.700-1.500-2.700 0S4 5.500 5 4s2.700-1.500 2.700 0S6 5.500 5 4" />
        </svg>
      </footer>
      <ColorPicker />
    </div>
  );
}
